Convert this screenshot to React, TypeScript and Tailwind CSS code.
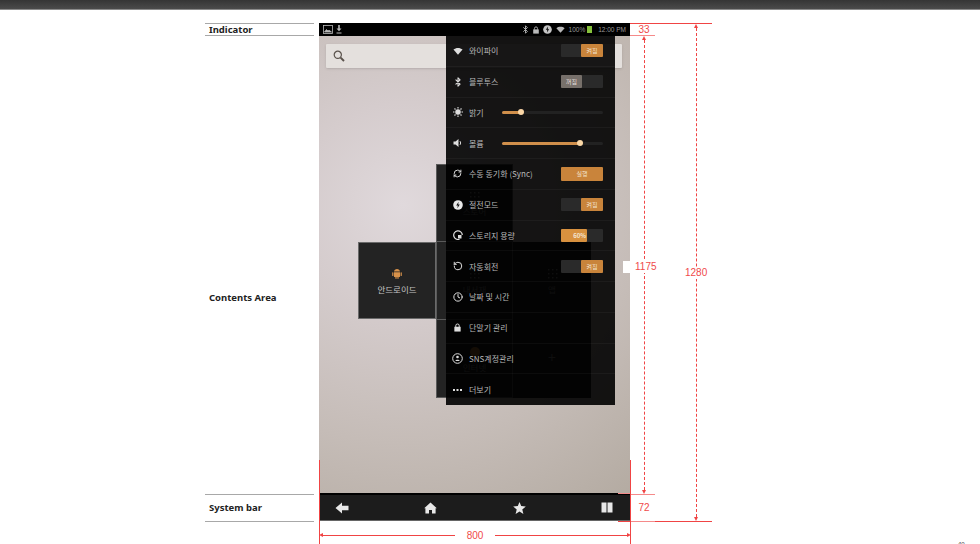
import { Bluetooth, Clock, RefreshCw, RotateCcw } from 'lucide-react';
import type { ReactNode } from 'react';

const KR = 'font-["Noto_Sans_CJK_KR","Noto_Sans",sans-serif]';

function WifiFan({ size = 10 }: { size?: number }) {
  return (
    <svg width={size} height={size} viewBox="0 0 12 12" fill="currentColor">
      <path d="M0.5 4.2C3.6 1.6 8.4 1.6 11.5 4.2L6 10.4Z" />
    </svg>
  );
}

function LockIcon({ size = 9 }: { size?: number }) {
  return (
    <svg width={size} height={size} viewBox="0 0 9 10" fill="none" stroke="currentColor">
      <path d="M2.6 4.5V3a1.9 1.9 0 0 1 3.8 0v1.5" strokeWidth="1.1" />
      <rect x="1" y="4.2" width="7" height="5.3" fill="currentColor" stroke="none" />
    </svg>
  );
}

function BoltCircle({ size = 10, fill, bolt }: { size?: number; fill: string; bolt: string }) {
  return (
    <svg width={size} height={size} viewBox="0 0 10 10">
      <circle cx="5" cy="5" r="4.8" fill={fill} />
      <path d="M5.6 1.8 3.2 5.4H4.8L4.4 8.2 6.8 4.6H5.2Z" fill={bolt} />
    </svg>
  );
}

function Toggle({ on }: { on: boolean }) {
  return (
    <div className="flex h-[13px] w-[42px] rounded-[1px] bg-[#2a2a2a] text-center text-[6px] leading-[13px]">
      {on ? (
        <>
          <div className="w-[20px]" />
          <div className="w-[22px] rounded-[1px] bg-[#c9843b] text-[#f3e2cd]">켜짐</div>
        </>
      ) : (
        <div className="w-[21px] rounded-[1px] bg-[#77706a] text-[#e4dfda]">꺼짐</div>
      )}
    </div>
  );
}

function Slider({ pct }: { pct: number }) {
  return (
    <div className="relative h-[3px] w-[101px] rounded-full bg-[#222222]">
      <div className="h-full rounded-full bg-[#d08f4b]" style={{ width: `${pct}%` }} />
      <div
        className="absolute top-[-2px] h-[6px] w-[6px] -translate-x-1/2 rounded-full bg-[#fbd7a6]"
        style={{ left: `${pct}%` }}
      />
    </div>
  );
}

const rows: { icon: ReactNode; label: string; control?: ReactNode; narrow?: boolean }[] = [
  { icon: <WifiFan />, label: '와이파이', control: <Toggle on /> },
  { icon: <Bluetooth size={10} strokeWidth={2.6} />, label: '블루투스', control: <Toggle on={false} /> },
  {
    icon: (
      <svg width="10" height="10" viewBox="0 0 10 10" fill="currentColor" stroke="currentColor" strokeWidth="1.1">
        <circle cx="5" cy="5" r="2.2" />
        <path d="M5 0v1.5M5 8.5V10M0 5h1.5M8.5 5H10M1.5 1.5l1 1M7.5 7.5l1 1M1.5 8.5l1-1M7.5 2.5l1-1" />
      </svg>
    ),
    label: '밝기',
    control: <Slider pct={19} />,
    narrow: true,
  },
  {
    icon: (
      <svg width="10" height="10" viewBox="0 0 10 10" fill="currentColor">
        <path d="M0.5 3.5H2.5L5.5 1V9L2.5 6.5H0.5Z" />
        <path d="M7 3.2C7.8 4.2 7.8 5.8 7 6.8" fill="none" stroke="currentColor" />
      </svg>
    ),
    label: '볼륨',
    control: <Slider pct={77} />,
    narrow: true,
  },
  {
    icon: <RefreshCw size={9} strokeWidth={2.6} />,
    label: '수동 동기화 (Sync)',
    control: (
      <div className="h-[14px] w-[42px] rounded-[1px] bg-[#c9843b] text-center text-[6px] leading-[14px] text-[#f3e2cd]">
        실행
      </div>
    ),
  },
  { icon: <BoltCircle fill="#e8e8e8" bolt="#111111" />, label: '절전모드', control: <Toggle on /> },
  {
    icon: (
      <svg width="10" height="10" viewBox="0 0 10 10" fill="none" stroke="currentColor" strokeWidth="1.2">
        <path d="M6.5 9.2A4.3 4.3 0 1 1 9.3 5" />
        <path d="M5 5h3.5v3.5H5Z" fill="currentColor" stroke="none" />
      </svg>
    ),
    label: '스토리지 용량',
    control: (
      <div className="flex h-[13px] w-[42px] rounded-[1px] bg-[#2a2a2a]">
        <div className="w-[26px] rounded-[1px] bg-[#d8913f] pr-[1px] text-right text-[6px] font-bold leading-[13px] text-[#f3e6d6]">
          60%
        </div>
      </div>
    ),
  },
  { icon: <RotateCcw size={10} strokeWidth={2.4} />, label: '자동회전', control: <Toggle on /> },
  { icon: <Clock size={10} strokeWidth={2.4} />, label: '날짜 및 시간' },
  { icon: <LockIcon />, label: '단말기 관리' },
  {
    icon: (
      <svg width="11" height="11" viewBox="0 0 11 11" fill="none" stroke="currentColor">
        <circle cx="5.5" cy="5.5" r="4.8" />
        <circle cx="5.5" cy="4" r="1.3" fill="currentColor" stroke="none" />
        <path d="M3.3 8C3.6 6.2 7.4 6.2 7.7 8Z" fill="currentColor" stroke="none" />
      </svg>
    ),
    label: 'SNS계정관리',
  },
  {
    icon: (
      <svg width="9" height="4" viewBox="0 0 9 4" fill="currentColor">
        <rect x="0" y="1" width="2" height="2" />
        <rect x="3.5" y="1" width="2" height="2" />
        <rect x="7" y="1" width="2" height="2" />
      </svg>
    ),
    label: '더보기',
  },
];

function DotGrid() {
  return (
    <svg width="11" height="11" viewBox="0 0 11 11" fill="currentColor">
      {[1, 5, 9].map((y) =>
        [1, 5, 9].map((x) => <rect key={`${x}-${y}`} x={x} y={y} width="1.5" height="1.5" />),
      )}
    </svg>
  );
}

function Tile({ className, icon, label }: { className: string; icon: ReactNode; label: string }) {
  return (
    <div className={`flex flex-col items-center justify-center pt-[2px] ${className}`}>
      <div className="flex h-[11px] items-center">{icon}</div>
      <span className="mt-[3.5px] text-[8.5px] leading-[12px]">{label}</span>
    </div>
  );
}

function VArrows() {
  return (
    <div className="flex h-full w-[4px] flex-col items-center">
      <div className="h-0 w-0 border-x-[2px] border-b-[4px] border-x-transparent border-b-[#f04444]" />
      <div className="flex-1 border-l border-dashed border-[#f04444]" />
      <div className="h-0 w-0 border-x-[2px] border-t-[4px] border-x-transparent border-t-[#f04444]" />
    </div>
  );
}

export default function App() {
  return (
    <div className={`relative h-[544px] w-[980px] overflow-hidden bg-white ${KR}`}>
      <div className="h-[10px] border-b border-[#8a8a8a] bg-gradient-to-b from-[#353535] to-[#4b4b4b]" />

      <div className="flex h-[512px] pl-[205px] pt-[13px]">
        {/* left labels */}
        <div className='mr-[5px] flex h-[499px] w-[109px] flex-col font-["Noto_Sans",sans-serif] text-[9.5px] font-bold text-[#222222]'>
          <div className="flex h-[13px] items-center border-y border-[#a8a8a8] pl-[4px] pt-[1px]">Indicator</div>
          <div className="flex-1 pl-[4px] pt-[255px]">Contents Area</div>
          <div className="flex h-[28px] items-center border-y border-[#a8a8a8] pl-[4px] pt-[1px]">System bar</div>
        </div>

        {/* device */}
        <div className="flex h-[498px] w-[311px] flex-col">
          <div className="flex h-[13px] items-center bg-black px-[4px] text-[#b9b9b9]">
            <svg width="10" height="9" viewBox="0 0 10 9" fill="none" stroke="currentColor" strokeWidth="0.8">
              <rect x="0.5" y="0.5" width="9" height="8" />
              <path d="M1.5 7 3.5 4.5 5 6 6 5.2 8.5 7Z" fill="currentColor" />
            </svg>
            <svg className="ml-[3px]" width="6" height="9" viewBox="0 0 6 9" fill="currentColor">
              <path d="M2.2 0h1.6v3.6H5.5L3 6.2.5 3.6h1.7ZM.5 7.6h5v1h-5Z" />
            </svg>
            <div className="flex-1" />
            <Bluetooth size={9} strokeWidth={2.4} />
            <span className="ml-[2px]"><LockIcon size={8} /></span>
            <span className="ml-[3px]"><BoltCircle size={9} fill="#c4c4c4" bolt="#000000" /></span>
            <span className="ml-[4px]"><WifiFan size={9} /></span>
            <span className='ml-[4px] font-["Liberation_Sans",sans-serif] text-[6.5px] text-[#9a9a9a]'>100%</span>
            <div className="ml-[2px] h-[7px] w-[5px] bg-[#86c23c]" />
            <span className='ml-[6px] font-["Liberation_Sans",sans-serif] text-[6.5px] text-[#9a9a9a]'>12:00 PM</span>
          </div>

          <div className="relative flex-1 bg-[radial-gradient(circle_at_27%_37%,#e0d9dc_0%,#d5cccd_28%,#c5bcb7_65%,#b4aba2_100%)] px-[7px] pt-[8px]">
            {/* search */}
            <div className="flex h-[24px] w-[296px] items-center rounded-[1px] bg-[#e4e0dd] pl-[7px] shadow-sm">
              <svg width="12" height="12" viewBox="0 0 12 12" fill="none" stroke="#5a524c">
                <circle cx="4.8" cy="4.8" r="3.6" strokeWidth="1.2" />
                <path d="M7.6 7.6 11 11" strokeWidth="2" />
              </svg>
            </div>

            {/* launcher tiles, they sit under the panel */}
            <div className="absolute left-[39px] top-[128px] grid grid-cols-[78px_77px_78px] grid-rows-[78px_77px_79px] text-[#8a8a8a]">
              <div />
              <Tile className="border border-[#5a5a5a] bg-[#232323]" icon={<DotGrid />} label="스토어" />
              <div />
              <Tile
                className="border border-[#6a6a6a] bg-[#232323] text-[#c4c4c4]"
                icon={
                  <svg width="10" height="11" viewBox="0 0 10 11" fill="#d8924a">
                    <path d="M2 3.6C2.2 2 3.4 1 5 1s2.8 1 3 2.6ZM2 4.2h6V8.4a.7.7 0 0 1-.7.7H6.6v1.2a.6.6 0 0 1-1.2 0V9.1h-.8v1.2a.6.6 0 0 1-1.2 0V9.1H2.7A.7.7 0 0 1 2 8.4ZM.2 4.8a.6.6 0 0 1 1.2 0v2.6a.6.6 0 0 1-1.2 0ZM8.6 4.8a.6.6 0 0 1 1.2 0v2.6a.6.6 0 0 1-1.2 0Z" />
                  </svg>
                }
                label="안드로이드"
              />
              <Tile className="border-x border-[#5a5a5a] bg-[#232323]" icon={<DotGrid />} label="내서재" />
              <Tile className="bg-[#1e1e1e]" icon={<DotGrid />} label="앱" />
              <div />
              <Tile
                className="border border-[#5a5a5a] bg-[#232323]"
                icon={<div className="h-[10px] w-[10px] rounded-full bg-[#c9843b]" />}
                label="인터넷"
              />
              <Tile className="bg-[#1e1e1e]" icon={<span className="text-[14px] leading-[11px]">+</span>} label="" />
            </div>

            {/* quick settings panel */}
            <div className="absolute left-[127px] top-0 w-[169px] bg-black/90 text-[#b8b8b8]">
              {rows.map((row) => (
                <div
                  key={row.label}
                  className="flex h-[30.75px] items-center border-b border-white/[0.04] pr-[12px] last:border-b-0"
                >
                  <div className="flex w-[23px] shrink-0 justify-center text-[#dedede]">{row.icon}</div>
                  <div className={`whitespace-nowrap pt-[1px] text-[8px] ${row.narrow ? 'w-[33px]' : 'flex-1'}`}>
                    {row.label}
                  </div>
                  {row.control}
                </div>
              ))}
            </div>
          </div>

          {/* system bar */}
          <div className="flex h-[28px] items-center justify-between border-b border-[#666666] border-t-2 border-t-black bg-[#1c1c1c] pl-[16px] pr-[17px] text-[#e8e8e8]">
            <svg width="14" height="12" viewBox="0 0 14 12" fill="currentColor">
              <path d="M7 0.5V3.8H13.5V8.2H7V11.5L0.5 6Z" />
            </svg>
            <svg width="13" height="12" viewBox="0 0 13 12" fill="currentColor">
              <path d="M6.5 0.5 12.8 6.2 11.6 6.2V11.5H8V8H5V11.5H1.4V6.2L0.2 6.2Z" />
            </svg>
            <svg width="13" height="12" viewBox="0 0 13 12" fill="currentColor">
              <path d="M6.5 0 8.2 4.1 12.8 4.5 9.3 7.4 10.4 12 6.5 9.5 2.6 12 3.7 7.4.2 4.5 4.8 4.1Z" />
            </svg>
            <svg width="12" height="11" viewBox="0 0 12 11" fill="currentColor">
              <path d="M0.5 0.5H5.5V10.5H0.5ZM6.5 0.5H11.5V10.5H6.5Z" />
            </svg>
          </div>
        </div>

        {/* height dimensions */}
        <div className='flex h-[499px] font-["Liberation_Sans",sans-serif] text-[10px] leading-[12px] text-[#f04a4a]'>
          <div className="flex w-[25px] flex-col border-t border-[#f04444]">
            <div className="h-[12px] border-b border-[#f58a8a] pl-[3px] text-center">33</div>
            <div className="relative flex-1 pl-[12px]">
              <VArrows />
              <div className="absolute left-[-7px] top-[225px] flex">
                <div className="h-[12px] w-[8px] bg-white" />
                <span className="bg-white pl-[4px]">1175</span>
              </div>
            </div>
            <div className="flex h-[28px] items-center justify-center border-y border-[#f58a8a] pl-[3px]">72</div>
          </div>
          <div className="relative w-[57px] border-y border-[#f04444] pl-[39px]">
            <VArrows />
            <div className="absolute left-[29px] top-[243px] bg-white px-[1px]">1280</div>
          </div>
        </div>
      </div>

      {/* width dimension */}
      <div className='ml-[319px] mt-[7px] flex h-[12px] w-[312px] items-center font-["Liberation_Sans",sans-serif] text-[10px] text-[#f04a4a]'>
        <div className="h-0 w-0 border-y-[2.5px] border-r-[4px] border-y-transparent border-r-[#f04444]" />
        <div className="h-px flex-1 bg-[#f04444]" />
        <span className="px-[12px]">800</span>
        <div className="h-px flex-1 bg-[#f04444]" />
        <div className="h-0 w-0 border-y-[2.5px] border-l-[4px] border-y-transparent border-l-[#f04444]" />
      </div>

      {/* ticks that run over the device edge */}
      <div className="absolute left-[319px] top-[460px] h-[84px] w-px bg-[#f04444]" />
      <div className="absolute left-[630px] top-[460px] h-[84px] w-px bg-[#f04444]" />
      <div className="absolute left-[618px] top-[493px] h-px w-[12px] bg-[#f58a8a]" />
      <div className="absolute left-[618px] top-[521px] h-px w-[12px] bg-[#f04444]" />

      <div className='absolute left-[958px] top-[541px] font-["Liberation_Sans",sans-serif] text-[6px] leading-[6px] text-[#444444]'>
        40
      </div>
    </div>
  );
}
